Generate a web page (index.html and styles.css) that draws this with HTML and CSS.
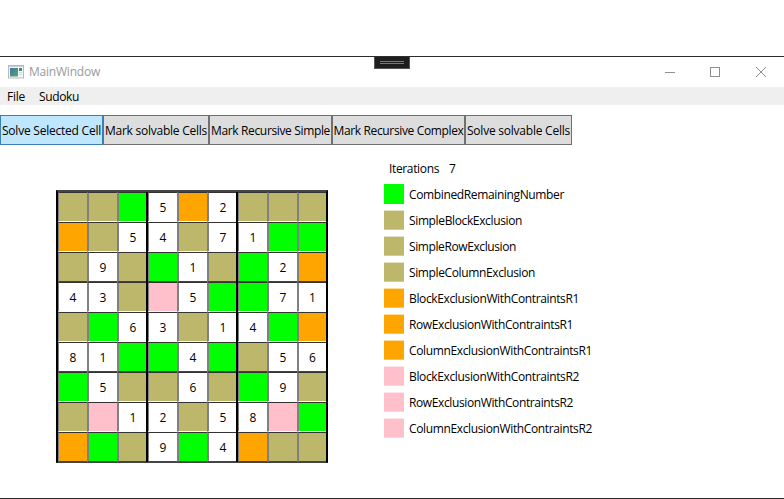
FILE: index.html
```html
<!DOCTYPE html>
<html lang="en">
<head>
<meta charset="utf-8">
<title>MainWindow</title>
<link rel="stylesheet" href="styles.css">
</head>
<body>
<div class="window">
  <header class="titlebar">
    <svg class="app-icon" width="16" height="14" viewBox="0 0 16 14">
      <defs><linearGradient id="pane" x1="0" y1="0" x2="1" y2="1"><stop offset="0" stop-color="#4474a0"/><stop offset="1" stop-color="#55a874"/></linearGradient></defs>
      <rect x=".5" y=".5" width="15" height="12.5" fill="#f4f5f6" stroke="#b5bbc2"/>
      <path d="M1 1.5h14" stroke="#c8ced5"/>
      <rect x="2" y="3" width="8" height="8.5" fill="url(#pane)"/>
      <rect x="11" y="3" width="3" height="3" fill="#438c7d"/>
      <path d="M11 7.5h3M11 9.5h3" stroke="#d3d7dc"/>
    </svg>
    <span class="title" data-width="71">MainWindow</span>
    <div class="handle"><i></i><i></i></div>
    <svg class="controls" width="102" height="12" viewBox="0 0 102 12" fill="none" stroke="#8f8f8f">
      <path d="M1 6.5h10"/>
      <rect x="46.5" y="1.5" width="9" height="9"/>
      <path d="M92 1l10 10M102 1L92 11"/>
    </svg>
  </header>
  <nav class="menu"><span data-width="18">File</span><span data-width="40">Sudoku</span></nav>
  <div class="toolbar">
    <button class="btn b1 active"><span data-width="99">Solve Selected Cell</span></button>
    <button class="btn b2"><span data-width="102">Mark solvable Cells</span></button>
    <button class="btn b3"><span data-width="119">Mark Recursive Simple</span></button>
    <button class="btn b4"><span data-width="130">Mark Recursive Complex</span></button>
    <button class="btn b5"><span data-width="103">Solve solvable Cells</span></button>
  </div>
  <main class="content">
    <div class="board" id="board"></div>
    <section class="legend">
      <div class="iterations"><span data-width="50">Iterations</span><span>7</span></div>
      <div class="entry"><i class="swatch G"></i><span data-width="155">CombinedRemainingNumber</span></div>
      <div class="entry"><i class="swatch K"></i><span data-width="113">SimpleBlockExclusion</span></div>
      <div class="entry"><i class="swatch K"></i><span data-width="107">SimpleRowExclusion</span></div>
      <div class="entry"><i class="swatch K"></i><span data-width="126">SimpleColumnExclusion</span></div>
      <div class="entry"><i class="swatch O"></i><span data-width="170">BlockExclusionWithContraintsR1</span></div>
      <div class="entry"><i class="swatch O"></i><span data-width="164">RowExclusionWithContraintsR1</span></div>
      <div class="entry"><i class="swatch O"></i><span data-width="183">ColumnExclusionWithContraintsR1</span></div>
      <div class="entry"><i class="swatch P"></i><span data-width="170">BlockExclusionWithContraintsR2</span></div>
      <div class="entry"><i class="swatch P"></i><span data-width="164">RowExclusionWithContraintsR2</span></div>
      <div class="entry"><i class="swatch P"></i><span data-width="183">ColumnExclusionWithContraintsR2</span></div>
    </section>
  </main>
</div>
<script src="app.js"></script>
</body>
</html>
```
FILE: styles.css
```css
* { box-sizing: border-box; }
body {
  margin: 0;
  background: #fff;
  color: #000;
  font: 12px/16px "Open Sans", "Noto Sans", sans-serif;
}
.window {
  width: 784px;
  height: 443px;
  margin-top: 56px;
  border-top: 1px solid #2c2c2c;
  border-bottom: 1px solid #2c2c2c;
}
span { white-space: nowrap; }
.titlebar {
  position: relative;
  display: flex;
  align-items: center;
  height: 30px;
  padding-left: 8px;
}
.app-icon { margin-right: 5px; }
.title { color: #999; }
.controls { margin: 0 18px 1px auto; overflow: visible; }
.handle {
  position: absolute;
  left: 374px;
  top: 0;
  width: 36px;
  height: 12px;
  padding: 4px 5px 0;
  background: #1e1e1e;
  border: 1px solid #555;
  border-top: 0;
}
.handle i { display: block; height: 1px; margin-bottom: 1px; background: #777; }
.menu {
  display: flex;
  gap: 14px;
  height: 18px;
  padding: 2px 7px 0;
  background: #efefef;
}
.toolbar { display: flex; margin-top: 10px; }
.btn {
  display: flex;
  align-items: center;
  justify-content: center;
  height: 30px;
  padding: 2px 0 0;
  font: inherit;
  color: #000;
  background: #ddd;
  border: 1px solid #707070;
  border-radius: 0;
}
.btn.active { background: #bee6fd; border-color: #3c7fb1; }
.b1 { width: 103px; }
.b2 { width: 106px; }
.b3 { width: 123px; }
.b4 { width: 133px; }
.b5 { width: 107px; }
.content { display: flex; align-items: flex-start; padding-left: 56px; }
.board {
  display: grid;
  grid-template-columns: 29px repeat(7, 30px) 29px;
  grid-auto-rows: 30px;
  width: 272px;
  height: 273px;
  margin-top: 45px;
  border: solid #000;
  border-width: 2px 2px 1px;
  border-top-color: #444;
  border-bottom-color: #444;
}
.cell {
  border-left: 2px solid #808080;
  border-top: 1px solid #333;
  border-bottom: 1px solid #fff;
  text-align: center;
  line-height: 30px;
}
.cell:nth-child(9n+1) { border-left-width: 1px; }

/* Heavy rule between blocks, laid over the thin cell divider. */
.cell:nth-child(9n+4), .cell:nth-child(9n+7) { position: relative; }
.cell:nth-child(9n+4)::before, .cell:nth-child(9n+7)::before {
  content: "";
  position: absolute;
  left: -3px;
  top: -1px;
  width: 2px;
  height: 30px;
  background: #000;
}
.row-end { border-bottom-color: #444; }
.G { background: #0f0; }
.K { background: #bdb76b; }
.O { background: orange; }
.P { background: pink; }
.legend { margin: 15px 0 0 56px; }
.iterations { display: flex; gap: 10px; height: 24px; padding: 1px 5px 0; }
.entry { display: flex; align-items: center; gap: 5px; height: 20px; margin-bottom: 6px; }
.entry span { padding-top: 2px; }
.swatch {
  width: 20px;
  height: 20px;
  border-top: 1px solid rgba(255, 255, 255, .6);
  border-bottom: 1px solid rgba(255, 255, 255, .3);
}
.swatch.G { border-color: transparent; }
```
FILE: app.js
```js
const rows = [
  "KKG5O2KKK",
  "OK54K71GG",
  "K9KG1KG2O",
  "43KP5GG71",
  "KG63K14GO",
  "81GG4GK56",
  "G5KK6KG9K",
  "KP12K58PG",
  "OGK9G4OKK"
];
const board = document.getElementById("board");
rows.forEach((row, r) => {
  for (const value of row) {
    const cell = document.createElement("div");
    cell.className = "cell" + (r % 3 === 2 ? " row-end" : "");
    if (/\d/.test(value)) cell.textContent = value;
    else cell.classList.add(value);
    board.append(cell);
  }
});

document.querySelectorAll("[data-width]").forEach(label => {
  const spare = label.dataset.width - label.getBoundingClientRect().width;
  label.style.letterSpacing = spare / label.textContent.length + "px";
});
```
